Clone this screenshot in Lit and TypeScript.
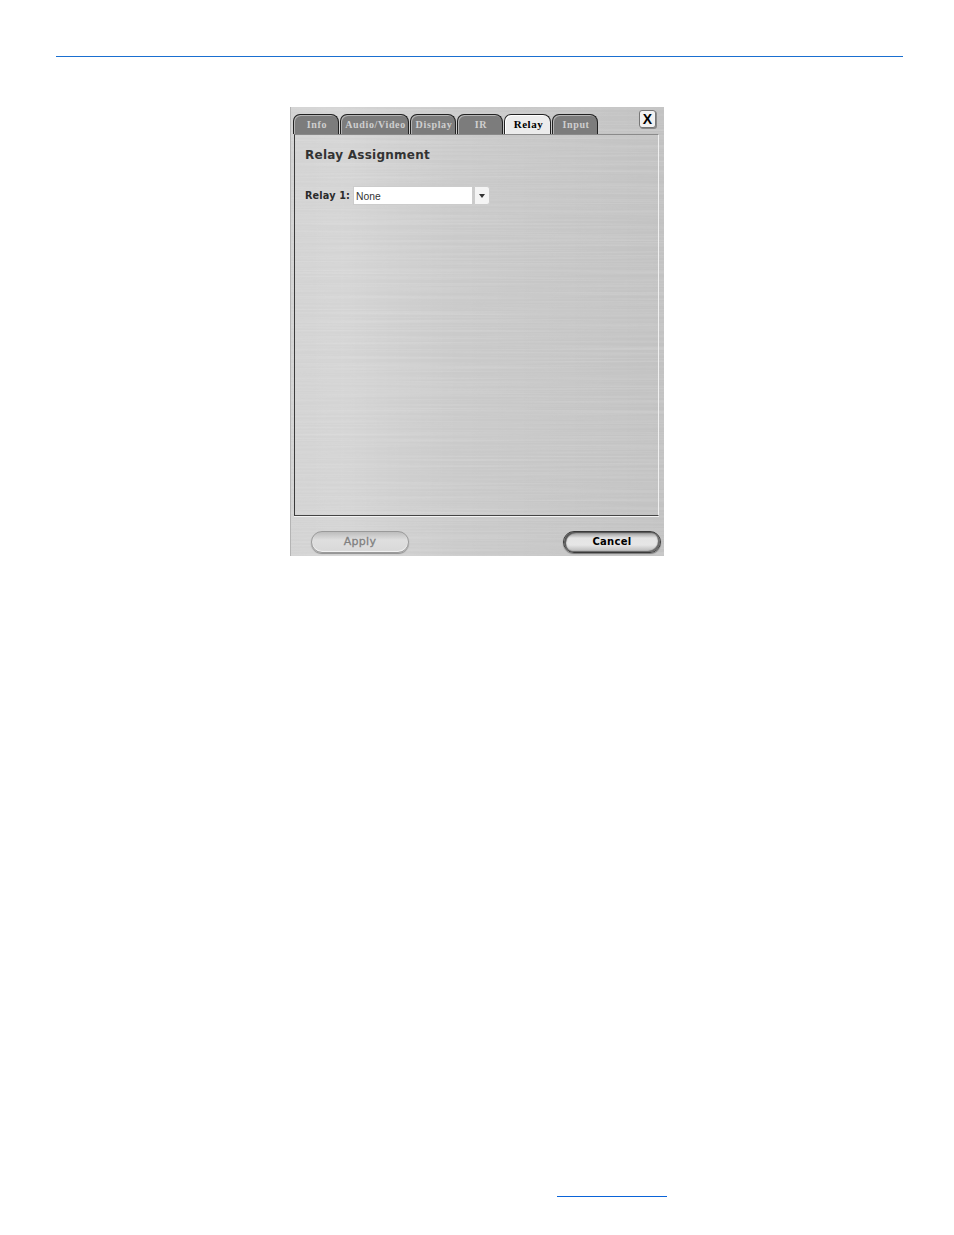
import { LitElement, html, css } from "lit";
import { customElement } from "lit/decorators.js";

const TABS = [
  { label: "Info", w: 46 },
  { label: "Audio/Video", w: 69 },
  { label: "Display", w: 46 },
  { label: "IR", w: 46 },
  { label: "Relay", w: 47, active: true },
  { label: "Input", w: 46 },
];

@customElement("app-root")
export class AppRoot extends LitElement {
  static styles = css`
    :host { display: block; background: #fff; height: 1235px; overflow: hidden; }
    .page { height: 1235px; display: flex; flex-direction: column; padding-top: 56px; box-sizing: border-box; }
    .rule { height: 1px; margin: 0 51px 0 56px; background: #1a6fd0; flex: none; }
    .dialog {
      position: relative; flex: none; margin: 50px 0 0 290px; width: 374px; height: 449px;
      display: flex; flex-direction: column; box-sizing: border-box; overflow: hidden;
      background:
        linear-gradient(90deg, rgba(255,255,255,.16), rgba(255,255,255,.20) 14%, rgba(0,0,0,0) 45%, rgba(0,0,0,.04) 100%),
        #cacaca;
      border-left: 1px solid #b4b4b4;
    }
    .metal { position: absolute; inset: 0; width: 100%; height: 100%; pointer-events: none; }
    .top { position: relative; height: 27px; flex: none; display: flex; align-items: flex-end; padding-left: 2px; gap: 1px; }
    .tab {
      box-sizing: border-box; height: 20px; flex: none; display: flex; align-items: center; justify-content: center;
      background: #7c7c7c; color: #cfcfcf; border: 1px solid #222; border-bottom: none; padding-left: 2px;
      border-radius: 7px 8px 0 0; font: bold 10px "Liberation Serif", serif; letter-spacing: .65px;
      box-shadow: inset 1px 1px 0 #b5b5b5;
    }
    .tab.active { background: #ececec; color: #000; font-size: 11px; letter-spacing: .5px; padding: 0 0 2px 2px; box-shadow: inset 1px 1px 0 #fff; }
    .close {
      position: absolute; left: 348px; top: 3px; width: 17px; height: 18px; box-sizing: border-box;
      display: flex; align-items: center; justify-content: center; background: #f1f1f1; border: 1px solid #777;
      border-radius: 3px; color: #000; font: bold 14px "Liberation Sans", sans-serif; box-shadow: 1px 1px 0 #888;
    }
    .panel {
      position: relative; margin-left: 3px; width: 365px; height: 382px; flex: none; box-sizing: border-box;
      border-left: 1px solid #3a3a3a; border-top: 1px solid #8a8a8a; border-right: 1px solid #f0f0f0;
      border-bottom: 1px solid #444;
      padding: 12px 0 0 10px; box-shadow: 0 1px 0 #f2f2f2;
    }
    h1 { margin: 0; font: bold 12px/16px "DejaVu Sans", sans-serif; color: #333; letter-spacing: .25px; }
    .field { display: flex; align-items: center; margin-top: 23px; height: 19px; }
    .field label { font: bold 9.7px "DejaVu Sans", sans-serif; color: #2a2a2a; width: 48px; flex: none; letter-spacing: .15px; white-space: nowrap; }
    .select { width: 120px; height: 19px; box-sizing: border-box; background: #fff; border: 1px solid #ccc; font: 10.3px/19px "Liberation Sans", sans-serif; color: #333; padding-left: 2px; flex: none; }
    .arrow {
      width: 16px; height: 19px; margin-left: 1px; flex: none; box-sizing: border-box; background: #f4f4f4; border: 1px solid #ccc;
      border-radius: 0 3px 3px 0; display: flex; align-items: center; justify-content: center;
    }
    .arrow i { width: 0; height: 0; border: 3px solid transparent; border-top: 4px solid #333; border-bottom: 0; }
    .foot { position: relative; flex: 1; display: flex; justify-content: space-between; align-items: flex-end; padding: 0 3px 3px 20px; }
    .btn {
      box-sizing: border-box; width: 98px; height: 22px; border-radius: 11px; display: flex; align-items: center; justify-content: center;
      padding-bottom: 2px; font: bold 10px "DejaVu Sans", sans-serif; letter-spacing: .3px;
    }
    .apply {
      color: #808080; border: 1px solid #9a9a9a; font-weight: normal; font-size: 11px; -webkit-text-stroke: .3px #808080;
      background: linear-gradient(#bdbdbd, #dfdfdf 40%, #d8d8d8);
      box-shadow: inset 0 -1px 1px #f4f4f4, 0 1px 1px #8f8f8f;
    }
    .cancel {
      color: #000; border: 1px solid #3a3a3a;
      background: linear-gradient(#8f8f8f, #e4e4e4 30%, #e6e6e6 65%, #b5b5b5);
      box-shadow: inset 2px 1px 1px #555, inset -2px -1px 1px #666, 0 1px 1px #777;
    }
    .link { flex: none; margin: auto 0 38px 557px; width: 110px; height: 1px; background: #0a63d8; }
  `;

  render() {
    return html`
      <div class="page">
        <div class="rule"></div>
        <div class="dialog">
          <svg class="metal" aria-hidden="true">
            <filter id="brush" x="0" y="0" width="100%" height="100%">
              <feTurbulence type="fractalNoise" baseFrequency="0.004 0.55" numOctaves="3" seed="7" />
              <feColorMatrix type="matrix" values="0 0 0 0 1  0 0 0 0 1  0 0 0 0 1  1.5 0 0 0 -0.55" />
            </filter>
            <rect width="100%" height="100%" filter="url(#brush)" opacity=".2" />
          </svg>
          <div class="top">
            ${TABS.map(
              (t) => html`<div class="tab ${t.active ? "active" : ""}" style="width:${t.w}px">${t.label}</div>`
            )}
            <div class="close">X</div>
          </div>
          <div class="panel">
            <h1>Relay Assignment</h1>
            <div class="field">
              <label>Relay 1:</label>
              <div class="select">None</div>
              <div class="arrow"><i></i></div>
            </div>
          </div>
          <div class="foot">
            <div class="btn apply">Apply</div>
            <div class="btn cancel">Cancel</div>
          </div>
        </div>
        <div class="link"></div>
      </div>
    `;
  }
}
